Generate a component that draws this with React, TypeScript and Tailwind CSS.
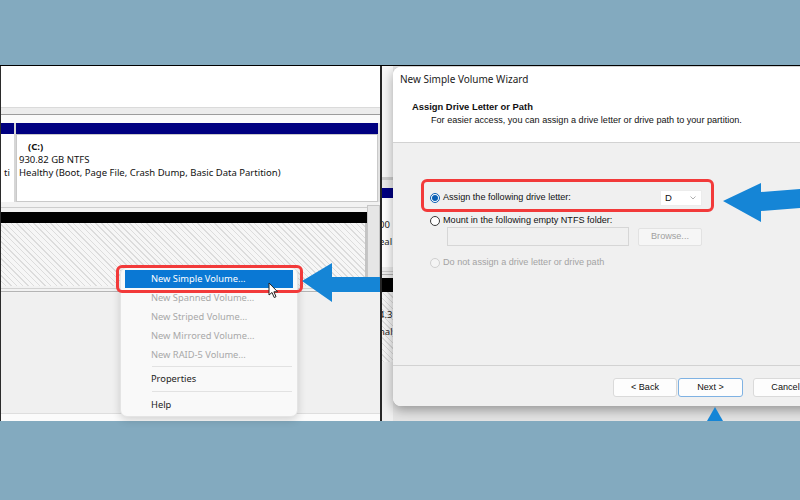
import React from 'react';

const hatch =
  'bg-[repeating-linear-gradient(45deg,#f6f6f6_0px,#f6f6f6_3px,#dcdcdc_3px,#dcdcdc_4px)]';

type RadioProps = { checked?: boolean; disabled?: boolean };

const Radio = ({ checked, disabled }: RadioProps) => {
  if (checked) {
    return (
      <span className="w-[10px] h-[10px] shrink-0 rounded-full border border-[#0a5fb4] bg-white flex items-center justify-center">
        <span className="w-[6px] h-[6px] rounded-full bg-[#0a5fb4]" />
      </span>
    );
  }
  return (
    <span
      className={
        disabled
          ? 'w-[10px] h-[10px] shrink-0 rounded-full border border-[#cfcfcf] bg-[#f4f4f4]'
          : 'w-[10px] h-[10px] shrink-0 rounded-full border border-[#3a3a3a] bg-white'
      }
    />
  );
};

const MenuItem = ({ label, disabled, h }: { label: string; disabled?: boolean; h: string }) => (
  <div
    className={`${h} flex items-center pl-[30px] ${disabled ? 'text-[#a8a8a8]' : 'text-[#1b1b1b]'}`}
  >
    {label}
  </div>
);

function LeftPanel() {
  return (
    <div className="relative w-[380px] shrink-0 flex flex-col bg-white border-l border-[#2b2b2b] font-['Noto_Sans',sans-serif] text-[#111] text-[9.5px]">
      <div className="h-[41px] bg-white" />
      <div className="h-[1px] bg-[#dadada]" />
      <div className="h-[6px] bg-[#ececec]" />
      <div className="h-[1px] bg-[#9c9c9c]" />
      <div className="h-[8px] bg-[#fafafa]" />

      {/* disk 0 row */}
      <div className="h-[79px] flex">
        <div className="w-[13px] flex flex-col overflow-hidden">
          <div className="h-[11px] bg-[#000080]" />
          <div className="flex-1 flex flex-col justify-end pb-[24px] pl-[3px] leading-[10px]">ti</div>
        </div>
        <div className="w-[2px] bg-[#d6d6d6]" />
        <div className="flex-1 flex flex-col">
          <div className="h-[11px] bg-[#000080]" />
          <div className="flex-1 border border-[#c9c9c9] bg-white pl-[2px] pt-[5px] leading-[13px]">
            <div className="pl-[9px] font-bold">(C:)</div>
            <div>930.82 GB NTFS</div>
            <div>Healthy (Boot, Page File, Crash Dump, Basic Data Partition)</div>
          </div>
        </div>
        <div className="w-[2px] bg-[#e2e2e2]" />
      </div>

      {/* unallocated row */}
      <div className="h-[91px] flex">
        <div className="flex-1 flex flex-col">
          <div className="h-[10px] bg-[#f2f2f2] flex flex-col justify-center">
            <div className="h-[1px] bg-[#cdcdcd]" />
          </div>
          <div className="h-[11px] bg-black" />
          <div className={`h-[63px] ${hatch} border-r-2 border-[#c4c4c4]`} />
          <div className="flex-1 bg-[#f2f2f2] flex flex-col justify-center gap-[2px]">
            <div className="h-[1px] bg-[#d2d2d2]" />
            <div className="h-[1px] bg-[#b4b4b4]" />
          </div>
        </div>
        <div className="w-[13px] flex flex-col bg-[#f2f2f2] pt-[3px] pb-[6px]">
          <div className="flex-1 border border-[#c6c6c6] bg-[#e6e6e6]" />
        </div>
      </div>

      <div className="flex-1 bg-[#f0f0f0]" />
      <div className="h-[8px] bg-[#fbfbfb] border-t border-[#dedede]" />

      {/* context menu */}
      <div className="absolute left-[119px] top-[201px] w-[178px] h-[150px] bg-[#f9f9f9] rounded-[7px] border border-[#e4e4e4] shadow-[0_3px_8px_rgba(0,0,0,0.16)] pt-[2px] text-[9.3px]">
        <div className="h-[18px] mx-[4px] bg-[#0a78d4] text-white flex items-center pl-[26px]">
          New Simple Volume...
        </div>
        <MenuItem label="New Spanned Volume..." disabled h="h-[19px]" />
        <MenuItem label="New Striped Volume..." disabled h="h-[19px]" />
        <MenuItem label="New Mirrored Volume..." disabled h="h-[19px]" />
        <MenuItem label="New RAID-5 Volume..." disabled h="h-[19px]" />
        <div className="py-[2px] pl-[31px] pr-[5px]">
          <div className="h-[1px] bg-[#e2e2e2]" />
        </div>
        <MenuItem label="Properties" h="h-[20px]" />
        <div className="py-[2px] pl-[31px] pr-[5px]">
          <div className="h-[1px] bg-[#e2e2e2]" />
        </div>
        <MenuItem label="Help" h="h-[21px]" />
      </div>

      {/* red highlight */}
      <div className="absolute left-[115px] top-[199px] w-[187px] h-[28px] border-[3px] border-[#f23a3a] rounded-[6px]" />

      {/* mouse cursor */}
      <svg className="absolute left-[267px] top-[216px]" width="11" height="17" viewBox="0 0 11 17">
        <path d="M1 1 L1 13 L4 10.5 L6.2 15.5 L8 14.7 L5.9 9.8 L9.6 9.8 Z" fill="#fff" stroke="#222" strokeWidth="1" />
      </svg>
    </div>
  );
}

function Strip() {
  return (
    <div className="w-[11px] shrink-0 flex flex-col overflow-hidden font-['Noto_Sans',sans-serif] text-[9.5px] text-[#222] leading-[10px]">
      <div className="h-[111px] bg-[#f7f7f7]" />
      <div className="h-[3px] bg-[#cfcfcf]" />
      <div className="h-[8px] bg-[#ececec]" />
      <div className="h-[10px] bg-[#000080]" />
      <div className="h-[69px] bg-white pt-[22px] -ml-[3px] whitespace-nowrap">
        <div>00</div>
        <div className="mt-[7px]">eal</div>
      </div>
      <div className="h-[11px] bg-[#efefef] flex flex-col justify-center gap-[2px]">
        <div className="h-[1px] bg-[#cdcdcd]" />
        <div className="h-[1px] bg-[#b4b4b4]" />
      </div>
      <div className="h-[14px] bg-black" />
      <div className={`h-[70px] ${hatch} pt-[18px] -ml-[3px] whitespace-nowrap`}>
        <div>4.3</div>
        <div className="mt-[7px]">nal</div>
      </div>
      <div className="flex-1 bg-[#efefef]" />
    </div>
  );
}

function Dialog() {
  return (
    <div className="w-[440px] h-[339px] shrink-0 flex flex-col bg-white rounded-l-[8px] overflow-hidden shadow-[0_4px_12px_rgba(0,0,0,0.35)] font-['Liberation_Sans',Arial,sans-serif] text-[9.1px] text-[#111]">
      <div className="h-[76px] shrink-0 bg-white border-b border-[#d2d2d2]">
        <div className="pt-[7px] pl-[7px] leading-[10px] text-[10px] font-['Noto_Sans',sans-serif] text-[#1b1b1b]">
          New Simple Volume Wizard
        </div>
        <div className="mt-[18px] pl-[19px] leading-[10px] font-bold text-[9.4px]">Assign Drive Letter or Path</div>
        <div className="mt-[3px] pl-[38px] leading-[10px]">
          For easier access, you can assign a drive letter or drive path to your partition.
        </div>
      </div>

      <div className="flex-1 bg-[#f0f0f0] pl-[28px] pt-[36px] flex flex-col">
        <div className="w-[293px] h-[33px] border-[3px] border-[#f23a3a] rounded-[6px] flex items-center pl-[6px] pr-[9px] pt-[5px]">
          <Radio checked />
          <span className="ml-[3px]">Assign the following drive letter:</span>
          <div className="ml-auto w-[42px] h-[16px] bg-white border border-[#ececec] flex items-center pl-[4px] pr-[5px]">
            <span className="text-[9.5px]">D</span>
            <svg className="ml-auto" width="6" height="4" viewBox="0 0 6 4">
              <path d="M0.5 0.5 L3 3 L5.5 0.5" fill="none" stroke="#9a9a9a" strokeWidth="0.8" />
            </svg>
          </div>
        </div>
        <div className="mt-[3px] h-[12px] pl-[9px] flex items-center">
          <Radio />
          <span className="ml-[3px]">Mount in the following empty NTFS folder:</span>
        </div>
        <div className="h-[19px] pl-[26px] flex items-start">
          <div className="w-[182px] h-[19px] border border-[#d6d6d6] bg-[#f0f0f0]" />
          <div className="ml-[9px] mt-[1px] w-[64px] h-[18px] border border-[#e2e2e2] bg-[#f6f6f6] rounded-[2px] flex items-center justify-center text-[#a0a0a0]">
            Browse...
          </div>
        </div>
        <div className="mt-[11px] h-[12px] pl-[9px] flex items-center text-[#a3a3a3]">
          <Radio disabled />
          <span className="ml-[3px]">Do not assign a drive letter or drive path</span>
        </div>
        <div className="flex-1" />
      </div>

      <div className="h-[41px] shrink-0 bg-[#f0f0f0] border-t border-[#d2d2d2] pt-[12px] pl-[220px] flex items-start">
        <div className="w-[64px] h-[19px] bg-[#fdfdfd] border border-[#dadada] rounded-[3px] flex items-center justify-center">
          &lt; Back
        </div>
        <div className="ml-[1px] w-[65px] h-[19px] bg-[#fdfdfd] border border-[#7fb2e3] rounded-[3px] flex items-center justify-center">
          Next &gt;
        </div>
        <div className="ml-[10px] w-[65px] h-[19px] bg-[#fdfdfd] border border-[#dadada] rounded-[3px] flex items-center justify-center">
          Cancel
        </div>
      </div>
    </div>
  );
}

function RightPanel() {
  return (
    <div className="flex-1 flex overflow-hidden bg-[#e4e4e4]">
      <Strip />
      <div className="pt-[1px]">
        <Dialog />
      </div>
    </div>
  );
}

export default function App() {
  return (
    <div className="relative w-[800px] h-[500px] overflow-hidden bg-[#83aabf] pt-[65px]">
      <div className="h-[356px] flex border-t border-black">
        <LeftPanel />
        <div className="w-[2px] shrink-0 bg-[#262626]" />
        <RightPanel />
      </div>

      {/* pointer arrows */}
      <svg className="absolute left-0 top-0 pointer-events-none" width="800" height="500" viewBox="0 0 800 500">
        <polygon points="302,281 332,263 332,277 380,277 380,292 332,292 332,302" fill="#1585d6" />
        <polygon points="723,201 761,183 761,192 800,189 800,208 761,211 761,222" fill="#1585d6" />
        <polygon points="715,407 707,421 723,421" fill="#1585d6" />
      </svg>
    </div>
  );
}
